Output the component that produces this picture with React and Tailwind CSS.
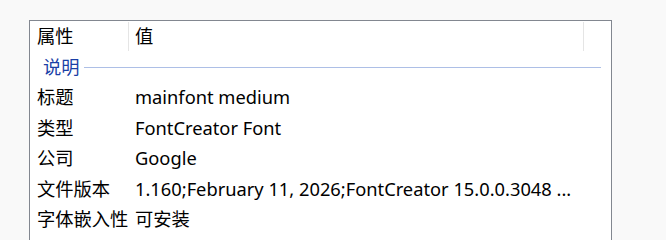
const rows = [
  ["标题", "mainfont medium"],
  ["类型", "FontCreator Font"],
  ["公司", "Google"],
  ["文件版本", "1.160;February 11, 2026;FontCreator 15.0.0.3048 ..."],
  ["字体嵌入性", "可安装"],
];

export default function App() {
  return (
    <div className="w-[666px] h-[240px] overflow-hidden bg-[#f9f9f9] pt-[20px] pl-[29px] font-['Noto_Sans','Noto_Sans_CJK_SC',sans-serif] text-[18.3px] text-black">
      <div className="w-[583px] h-[240px] border-t border-l border-r border-[#828790] bg-white">
        {/* column header */}
        <div className="flex h-[31px] items-center">
          <div className="w-[98px] h-full flex items-center pl-[7px]">
            <span className="leading-none">属性</span>
          </div>
          <div className="w-px h-[29px] self-start mt-[1px] bg-[#e5e5e5]" />
          <div className="w-[454px] h-full flex items-center pl-[6px]">
            <span className="leading-none">值</span>
          </div>
          <div className="w-px h-[29px] self-start mt-[1px] bg-[#e5e5e5]" />
        </div>

        {/* group */}
        <div className="flex h-[30px] items-center pl-[13px] pr-[10px] gap-[4px]">
          <span className="leading-none text-[#1a3fa6]">说明</span>
          <div className="flex-1 h-px bg-[#adbfe6]" />
        </div>

        {rows.map(([k, v]) => (
          <div key={k} className="flex h-[30.5px] items-center">
            <div className="w-[99px] pl-[7px] leading-none whitespace-nowrap">{k}</div>
            <div className="pl-[6px] leading-none whitespace-nowrap">{v}</div>
          </div>
        ))}
      </div>
    </div>
  );
}
